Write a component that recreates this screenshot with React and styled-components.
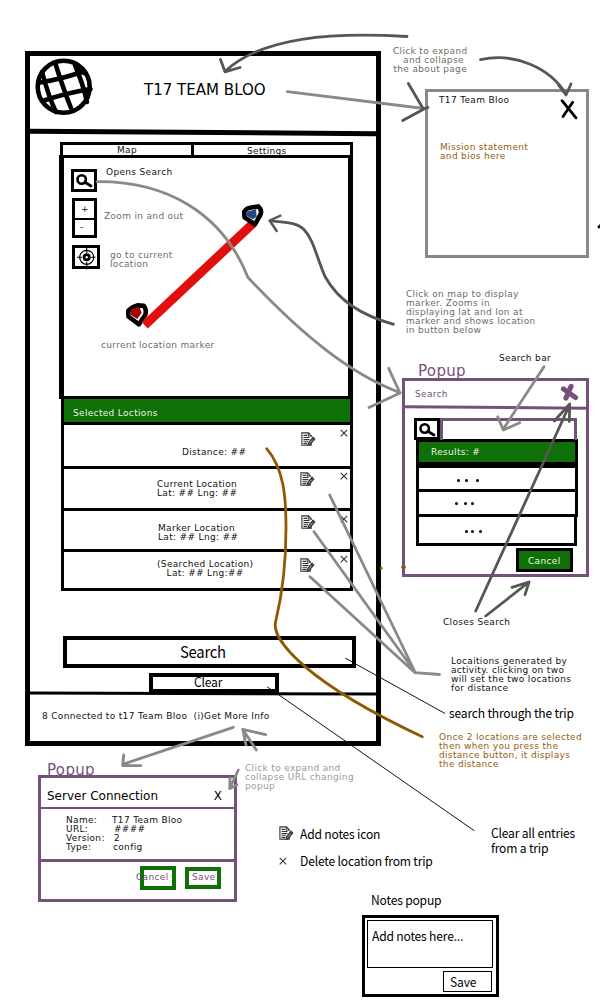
import React from "react";
import styled, { createGlobalStyle } from "styled-components";

const C = {
  dark: "#555753",
  mid: "#888a85",
  purple: "#75507b",
  brown: "#8f5902",
  green: "#107008",
};

const Global = createGlobalStyle`
  *, *::before, *::after { box-sizing: border-box; }
  body { margin: 0; background: #fff; }
`;

const Board = styled.main`
  position: relative;
  width: 600px;
  height: 1000px;
  overflow: hidden;
  background: #fff;
  color: #111;
  font: 9px/9px "DejaVu Sans", sans-serif;
  letter-spacing: 0.33px;
  white-space: pre;
`;

/* A window or note pinned on the free canvas */
const Pinned = styled.section`
  position: absolute;
  left: ${(p) => p.$x}px;
  top: ${(p) => p.$y}px;
`;

const Note = styled(Pinned).attrs({ as: "p" })`
  margin: 0;
  color: ${(p) => p.$c || "#111"};
  text-align: ${(p) => p.$align || "left"};
`;

const PopupTitle = styled(Note)`
  color: ${C.purple};
  font-size: 15px;
  line-height: 16px;
  letter-spacing: 0.35px;
`;

/* Slightly condensed humanist lettering */
const Narrow = styled.span`
  display: inline-block;
  transform: scaleX(${(p) => p.$s || 0.93});
  transform-origin: left;
`;

const Caption = styled(Note)`
  color: #000;
  font: 13px/15px "Noto Sans CJK SC", "Noto Sans", sans-serif;
  letter-spacing: -0.2px;
`;

const Frame = styled(Pinned)`
  width: ${(p) => p.$w}px;
  height: ${(p) => p.$h}px;
  border: ${(p) => p.$b || 3}px solid ${(p) => p.$c || "#000"};
`;

const Rule = styled.div`
  height: ${(p) => p.$h}px;
  margin-top: ${(p) => p.$mt || 0}px;
  background: ${(p) => p.$c || "#000"};
  transform: skewY(${(p) => p.$tilt || 0}deg);
`;

/* ---------- Phone ---------- */
const Header = styled.header`
  display: flex;
  height: 74px;
  padding: 1px 0 0 4px;
`;

const Title = styled.h1`
  margin: 23px 0 0 50px;
  font: 400 16px/20px "DejaVu Sans", sans-serif;
  letter-spacing: 0;
  color: #000;
`;

const Tabs = styled.nav`
  display: flex;
  width: 293px;
  height: 13px;
  margin: 7px 0 0 30px;
  border: 3px solid #000;
  border-bottom: 0;
`;

const Tab = styled.div`
  width: ${(p) => p.$w}px;
  padding: ${(p) => p.$pad};
  border-right: ${(p) => (p.$divided ? "3px solid #000" : "0")};
`;

const MapPanel = styled.div`
  width: 294px;
  height: 244px;
  margin-left: 29px;
  padding: 11px 0 0 7px;
  border: 5px solid #000;
  border-top-width: 3px;
  border-bottom-width: 3px;
`;

const ToolRow = styled.div`
  display: flex;
  align-items: flex-start;
  margin-top: ${(p) => p.$mt || 0}px;
  padding-left: ${(p) => p.$pl || 0}px;
`;

const ToolText = styled.span`
  padding: ${(p) => p.$pad};
  margin-top: ${(p) => p.$mt || 0}px;
  color: ${(p) => p.$c || "#111"};
`;

const IconBox = styled.div`
  display: flex;
  flex: none;
  width: ${(p) => p.$w}px;
  height: ${(p) => p.$h}px;
  border: 3px solid #000;
  background: #fff;
  svg { flex: none; overflow: visible; }
`;

const ZoomBox = styled.div`
  width: 25px;
  height: 40px;
  border: 3px solid #000;
`;

const ZoomKey = styled.div`
  height: 17px;
  padding: ${(p) => p.$pad};
  & + & { border-top: 2px solid #000; }
`;

const List = styled.div`
  width: 292px;
  margin-left: 31px;
  border: solid #000;
  border-width: 0 3px;
`;

const ListHeader = styled.div`
  height: 26px;
  padding: 10px 0 0 9px;
  border-bottom: 3px solid #000;
  background: ${C.green};
  color: #e8f5e6;
`;

const ListRow = styled.div`
  display: flex;
  justify-content: space-between;
  height: ${(p) => p.$h}px;
  border-bottom: 3px solid #000;
`;

const RowText = styled.div`
  padding: ${(p) => p.$pad};
`;

const RowTools = styled.div`
  display: flex;
  gap: ${(p) => p.$gap}px;
  padding: ${(p) => p.$top}px 2px 0 0;
  svg:first-child { margin-top: ${(p) => p.$drop}px; }
`;

const BigButton = styled.div`
  width: ${(p) => p.$w}px;
  height: ${(p) => p.$h}px;
  margin: ${(p) => p.$m};
  padding-left: ${(p) => p.$pl}px;
  border: 4px solid #000;
  color: #000;
  font: ${(p) => p.$fs}px/${(p) => p.$lh}px "Noto Sans CJK SC", "Noto Sans", sans-serif;
  letter-spacing: ${(p) => p.$ls}px;
`;

const Footer = styled.footer`
  padding: 17px 0 0 12px;
`;

/* ---------- Search popup ---------- */
const SearchHead = styled.div`
  height: 25px;
  padding: 9px 0 0 10px;
  color: ${C.purple};
`;

const SearchBar = styled.div`
  display: flex;
  height: 21px;
  margin: 9px 0 0 9px;
`;

const SearchInput = styled.div`
  width: 137px;
  height: 22px;
  border: 3px solid ${C.purple};
  border-bottom: 0;
`;

const Results = styled.div`
  width: 162px;
  margin-left: 11px;
`;

const ResultsHead = styled.div`
  height: 26px;
  padding: 6px 0 0 12px;
  border: 3px solid #000;
  background: ${C.green};
  color: #e8f5e6;
`;

const ResultRow = styled.div`
  display: flex;
  width: ${(p) => p.$w}px;
  height: ${(p) => p.$h}px;
  padding: ${(p) => p.$pad};
  border: solid #000;
  border-width: ${(p) => (p.$first ? 3 : 0)}px 3px 3px;
`;

const Dot = styled.i`
  width: 3px;
  height: 3px;
  margin-right: ${(p) => p.$gap || 0}px;
  border-radius: 50%;
  background: #000;
`;

const CancelButton = styled.div`
  width: 57px;
  height: 24px;
  margin: 2px 0 0 111px;
  padding: 6px 0 0 9px;
  border: 3px solid #000;
  background: ${C.green};
  color: #e8f5e6;
`;

/* ---------- Server popup ---------- */
const ServerHead = styled.div`
  display: flex;
  justify-content: space-between;
  height: 29px;
  padding: 10px 12px 0 6px;
  font-size: 12px;
  line-height: 16px;
  letter-spacing: 0;
  color: #000;
`;

const Fields = styled.div`
  height: 50px;
  padding: 7px 0 0 25px;
`;

const Field = styled.div`
  display: flex;
  span:first-child { width: ${(p) => p.$w}px; }
`;

const Actions = styled.div`
  display: flex;
  gap: 9px;
  padding: 4px 0 0 99px;
`;

const OutlineButton = styled.div`
  display: flex;
  width: 36px;
  height: ${(p) => p.$h}px;
  margin-top: ${(p) => p.$mt || 0}px;
  padding-top: ${(p) => p.$pt}px;
  border: 4px solid ${C.green};
  color: ${C.purple};
  span { margin-left: ${(p) => p.$shift}px; }
`;

/* ---------- Notes popup ---------- */
const NotesBody = styled.div`
  display: flex;
  flex-direction: column;
  align-items: flex-end;
  gap: 3px;
  padding: 2px 3px 0 2px;
  color: #000;
  font: 13px/15px "Noto Sans CJK SC", "Noto Sans", sans-serif;
  letter-spacing: -0.2px;
`;

const TextArea = styled.div`
  align-self: stretch;
  height: 48px;
  padding: 7px 0 0 4px;
  border: 1px solid #000;
`;

const SaveNote = styled.div`
  width: 49px;
  height: 21px;
  margin-right: 1px;
  padding: 2px 0 0 6px;
  border: 1px solid #000;
`;

const Ink = styled.svg`
  position: absolute;
  inset: 0;
  pointer-events: none;
  fill: none;
  stroke-linecap: round;
  stroke-linejoin: round;
`;

const Globe = () => (
  <svg width="60" height="60" viewBox="34 57 60 60" fill="none" stroke="#000" strokeWidth="4.6" strokeLinecap="round">
    <circle cx="63.7" cy="86.7" r="26" />
    <path d="M40 82.5Q62 79 83 71.5M42.5 101Q66 93 90.5 89M55.5 64Q63 88 71 108M75 65Q83 84 87 102M42 72Q49 98 56 112M76 64L84 73" />
  </svg>
);

const Magnifier = () => (
  <svg width="20" height="17" viewBox="0 0 20 17" fill="none" stroke="#000" strokeLinecap="round">
    <circle cx="7.7" cy="7.5" r="4.2" strokeWidth="2.6" />
    <path d="M10.8 10.3L17 14" strokeWidth="2.8" />
  </svg>
);

const Target = () => (
  <svg width="22" height="18" viewBox="0 0 22 18" fill="none" stroke="#000">
    <circle cx="11.7" cy="9.3" r="7" strokeWidth="1.2" />
    <circle cx="11.7" cy="9.3" r="2.6" strokeWidth="2.8" />
    <path d="M11.7 -3V5M11.7 14V21.5M2 9.3H7M16 9.3H20.5" strokeWidth="1.1" />
  </svg>
);

const NoteIcon = () => (
  <svg width="15" height="15" viewBox="0 0 15 15" fill="none" stroke="#333" strokeWidth="1.1">
    <path d="M10.2 10.5V13.3H.9V.9H7.6L10.2 3.6V5" />
    <path d="M7.2 1V4H10.2M2.5 3.4H6M2.5 5.5H8.5M2.5 7.6H8.5M2.5 9.7H7M2.5 11.6H6.4" />
    <path d="M12 5.2L13.8 7L9.3 12.2L7.2 13L7.8 10.6Z" fill="#888" />
    <path d="M11 6.4L12.8 8.2" />
  </svg>
);

const Cross = () => (
  <svg width="8" height="8" viewBox="0 0 8 8" stroke="#333" strokeWidth="1.1">
    <path d="M.7 .8L7.2 7.3M7.2 .8L.7 7.3" />
  </svg>
);

const places = [
  { h: 44, pad: "23px 0 0 118px", text: "Distance: ##", top: 4, drop: 3, gap: 24 },
  { h: 42, pad: "11px 0 0 93px", text: "Current Location\nLat: ## Lng: ##", top: 3, drop: 0, gap: 25 },
  { h: 41, pad: "13px 0 0 94px", text: "Marker Location\nLat: ## Lng: ##", top: 4, drop: 0, gap: 24 },
  { h: 39, pad: "8px 0 0 93px", text: "(Searched Location)\n   Lat: ## Lng:##", top: 3, drop: 3, gap: 25 },
];

const Phone = () => (
  <Frame $x={25} $y={51} $w={356} $h={695} $b={5}>
    <Header>
      <Globe />
      <Title><Narrow $s={0.94}>T17 TEAM BLOO</Narrow></Title>
    </Header>
    <Rule $h={5} $tilt={0.4} />
    <Tabs>
      <Tab $w={131} $pad="1px 0 0 54px" $divided>Map</Tab>
      <Tab $w={156} $pad="2px 0 0 53px">Settings</Tab>
    </Tabs>
    <MapPanel>
      <ToolRow>
        <IconBox $w={26} $h={23}><Magnifier /></IconBox>
        <ToolText $pad="0 0 0 9px" $mt={-1}>Opens Search</ToolText>
      </ToolRow>
      <ToolRow $mt={6} $pl={1}>
        <ZoomBox>
          <ZoomKey $pad="4px 0 0 6px">+</ZoomKey>
          <ZoomKey $pad="3px 0 0 5px">-</ZoomKey>
        </ZoomBox>
        <ToolText $c="#6b6d69" $pad="14px 0 0 7px">Zoom in and out</ToolText>
      </ToolRow>
      <ToolRow $mt={7} $pl={1}>
        <IconBox $w={28} $h={24}><Target /></IconBox>
        <ToolText $c="#6b6d69" $pad="6px 0 0 10px">{"go to current\nlocation"}</ToolText>
      </ToolRow>
      <ToolRow $mt={72} $pl={30}>
        <ToolText $c="#6b6d69">current location marker</ToolText>
      </ToolRow>
    </MapPanel>
    <List>
      <ListHeader>Selected Loctions</ListHeader>
      {places.map((p) => (
        <ListRow key={p.text} $h={p.h}>
          <RowText $pad={p.pad}>{p.text}</RowText>
          <RowTools $top={p.top} $drop={p.drop} $gap={p.gap}>
            <NoteIcon />
            <Cross />
          </RowTools>
        </ListRow>
      ))}
    </List>
    <BigButton $w={293} $h={32} $m="45px 0 0 33px" $pl={113} $fs={16} $lh={22} $ls={-0.3}><Narrow>Search</Narrow></BigButton>
    <BigButton $w={130} $h={20} $m="5px 0 0 119px" $pl={41} $fs={13} $lh={10} $ls={-0.2}><Narrow>Clear</Narrow></BigButton>
    <Rule $h={3} $mt={-1} $tilt={0.15} />
    <Footer>{"8 Connected to t17 Team Bloo  (i)Get More Info"}</Footer>
  </Frame>
);

const SearchPopup = () => (
  <Frame $x={402} $y={378} $w={187} $h={199} $c={C.purple}>
    <SearchHead>Search</SearchHead>
    <Rule $h={3} $c={C.purple} $tilt={0.4} />
    <SearchBar>
      <IconBox $w={26} $h={22}><Magnifier /></IconBox>
      <SearchInput />
    </SearchBar>
    <Results>
      <ResultsHead>Results: #</ResultsHead>
      <ResultRow $first $w={162} $h={27} $pad="11px 0 0 38px"><Dot $gap={5} /><Dot $gap={8} /><Dot /></ResultRow>
      <ResultRow $w={162} $h={25} $pad="10px 0 0 36px"><Dot $gap={6} /><Dot $gap={4} /><Dot /></ResultRow>
      <ResultRow $w={161} $h={29} $pad="13px 0 0 46px"><Dot $gap={3} /><Dot $gap={5} /><Dot /></ResultRow>
    </Results>
    <CancelButton>Cancel</CancelButton>
  </Frame>
);

const ServerPopup = () => (
  <Frame $x={38} $y={775} $w={199} $h={127} $c={C.purple}>
    <ServerHead><span>Server Connection</span><span>X</span></ServerHead>
    <Rule $h={2} $c={C.purple} />
    <Fields>
      <Field $w={46}><span>Name:</span><span>T17 Team Bloo</span></Field>
      <Field $w={48}><span>URL:</span><span>####</span></Field>
      <Field $w={48}><span>Version:</span><span>2</span></Field>
      <Field $w={47}><span>Type:</span><span>config</span></Field>
    </Fields>
    <Rule $h={3} $c={C.purple} />
    <Actions>
      <OutlineButton $h={24} $pt={3} $shift={-8}><span>Cancel</span></OutlineButton>
      <OutlineButton $h={22} $mt={1} $pt={2} $shift={3}><span>Save</span></OutlineButton>
    </Actions>
  </Frame>
);

const Annotations = () => (
  <Ink width="600" height="1000" viewBox="0 0 600 1000">
    <path stroke="#000" strokeWidth="4.6" d="M128.3 310.8Q132 306.6 137.3 305.4L143.8 305.8Q147 310 145.2 315L139 324.3L128.4 316.5Z" />
    <path fill="#a40000" d="M130.7 309.5L139.3 306.7L141.7 312.7L137.3 318.9L131 315Z" />
    <path stroke="#e20f0f" strokeWidth="9" strokeLinecap="butt" d="M144.7 325.3L253 223.5" />
    <path stroke="#000" strokeWidth="4.6" d="M244.2 211.7Q247 208 250 207.8L258.3 206.4Q262.3 210 260.5 214.5L255 224.3L244.5 217.3Z" />
    <path fill="#204a87" d="M246.5 211.7L256 209.3L256.7 216.7L252.7 219.3L247 216Z" />

    <g stroke={C.mid} strokeWidth="2.8">
      <path d="M287.3 91.7L424 108.5" />
      <path d="M97 181.7C165 181 222 212 248 277.5C302 335 350 374 400 392.7" />
      <path d="M388.7 368.3L400 393L369 407.5" />
      <path d="M329.7 495L415 672M314 531.7L415 672M310 576.7L415 672.7L439.5 674.5" />
      <path d="M544 366.7L503.3 429M497.7 416.7L503.3 430L519.7 422.7" />
      <path d="M233.3 727.3L122.7 764.3M123.7 755L122.7 765.5L140.7 765.7" />
      <path d="M265.7 734.7L242.7 729.3L256.3 750M243 730L246 745" />
      <path d="M238.3 770L230 788M230 778L229.7 788.5L237 785" />
    </g>

    <g stroke={C.dark} strokeWidth="2.8">
      <path d="M407 36.5C332 32 262 37 225.5 71M220.5 59.5L225 71.8L240 67.5" />
      <path d="M408.3 83.5L423.5 109.3L402.7 120.5M423 109.3L428 107.5" />
      <path d="M480.5 59.7C515 52 550 68 566 94M558.5 85L566 95L571 84" />
      <path strokeLinecap="butt" d="M394.5 324.7C360 315 338 300 325 276.5C316 256 314 240 303.5 229C296 222 285 222.5 270 220.7" />
      <path strokeWidth="2.4" d="M280.5 215.7L269.5 220.5L276.7 231" />
      <path d="M475.7 611L569.5 405M554.3 421L569.7 404L569.3 421.5" />
      <path d="M485.7 616L529 582M512 587.3L529 582L525 594.7" />
    </g>

    <g stroke={C.brown} strokeWidth="2.8">
      <path d="M266.7 448.7C284 469 286 497 286 528C286 560 282 595 276 620C269 640 310 684 422.3 736.7" />
      <path d="M402.5 567.2H404.5M381 568.2H381.3" />
    </g>

    <path stroke="#111" strokeWidth="1" d="M345.5 658.3L444.7 713.3M267.5 687L474 830.5" />
    <path stroke="#000" strokeWidth="2.8" d="M562 100.7L576 117.8M572.7 102.3L563 116.5" />
    <path stroke="#000" strokeWidth="2.8" d="M599 227L602 224" />
    <path stroke={C.purple} strokeWidth="5.2" d="M563.5 389L575.5 397.5M571 386.5L566 398" />
  </Ink>
);

const LegendRow = styled(Pinned)`
  display: flex;
  align-items: center;
  gap: ${(p) => p.$gap}px;
  color: #000;
  font: 13px/15px "Noto Sans CJK SC", "Noto Sans", sans-serif;
  letter-spacing: -0.2px;
`;

export default function App() {
  return (
    <>
      <Global />
      <Board>
        <Phone />

        <Frame $x={425} $y={89} $w={164} $h={169} $c={C.mid} />
        <Note $x={439} $y={96}>T17 Team Bloo</Note>
        <Note $x={440} $y={143} $c="#946010">{"Mission statement\nand bios here"}</Note>

        <Note $x={393} $y={47} $c="#6b6d69" $align="center">{"Click to expand\n  and collapse\nthe about page"}</Note>
        <Note $x={406} $y={290} $c="#6b6d69">
          {"Click on map to display\nmarker. Zooms in\ndisplaying lat and lon at\nmarker and shows location\nin button below"}
        </Note>

        <SearchPopup />
        <PopupTitle $x={418} $y={363}>Popup</PopupTitle>
        <Note $x={499} $y={354}>Search bar</Note>
        <Note $x={443} $y={618}>Closes Search</Note>
        <Note $x={451} $y={657}>
          {"Locaitions generated by\nactivity. clicking on two\nwill set the two locations\nfor distance"}
        </Note>
        <Caption $x={449} $y={705}><Narrow>search through the trip</Narrow></Caption>
        <Note $x={439} $y={733} $c="#946010">
          {"Once 2 locations are selected\nthen when you press the\ndistance button, it displays\nthe distance"}
        </Note>

        <ServerPopup />
        <PopupTitle $x={47} $y={762}>Popup</PopupTitle>
        <Note $x={245} $y={764} $c="#999b97">{"Click to expand and\ncollapse URL changing\npopup"}</Note>

        <LegendRow $x={279} $y={826} $gap={6}><NoteIcon /><Narrow>Add notes icon</Narrow></LegendRow>
        <LegendRow $x={279} $y={853} $gap={13}><Cross /><Narrow>Delete location from trip</Narrow></LegendRow>
        <Caption $x={491} $y={825}><Narrow>{"Clear all entries\nfrom a trip"}</Narrow></Caption>
        <Caption $x={371} $y={892}><Narrow>Notes popup</Narrow></Caption>

        <Frame $x={362} $y={915} $w={137} $h={82}>
          <NotesBody>
            <TextArea><Narrow>Add notes here...</Narrow></TextArea>
            <SaveNote><Narrow>Save</Narrow></SaveNote>
          </NotesBody>
        </Frame>

        <Annotations />
      </Board>
    </>
  );
}
